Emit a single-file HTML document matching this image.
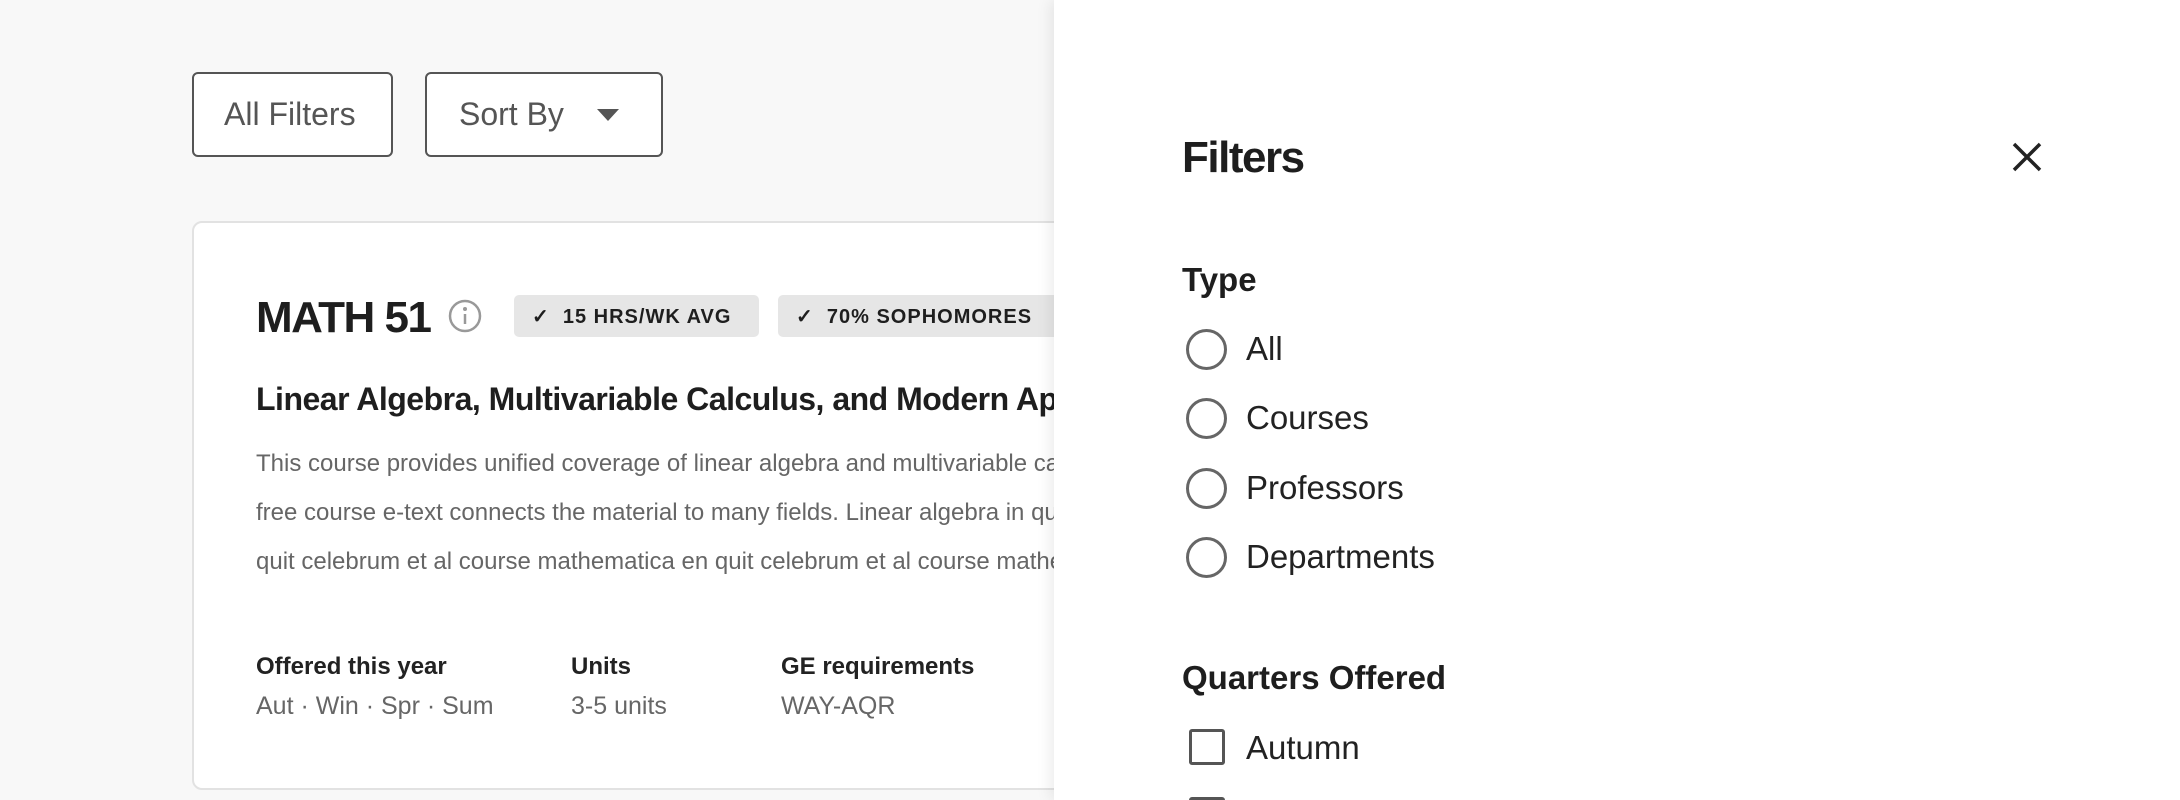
<!DOCTYPE html>
<html style="overflow:hidden;height:800px"><head><meta charset="utf-8"><style>
*{margin:0;padding:0;box-sizing:border-box}
body{width:2180px;height:800px;overflow:hidden;background:#f8f8f8;font-family:"Liberation Sans",sans-serif;position:relative;color:#1e1e1e}
.btn{position:absolute;top:72px;height:85px;border:2px solid #555;border-radius:6px;background:#fff;font-size:32px;color:#555;display:flex;align-items:center}
.card{position:absolute;left:192px;top:221px;width:1200px;height:569px;background:#fff;border:2px solid #e2e2e2;border-radius:10px;overflow:hidden}
.abs{position:absolute;white-space:nowrap}
.tag{position:absolute;top:72px;height:42px;background:#e6e6e6;border-radius:5px;font-size:20px;font-weight:bold;letter-spacing:1px;display:flex;align-items:center;padding-left:18px}
.desc{font-size:24px;color:#666;line-height:49px}
.lab{font-size:24px;font-weight:bold;color:#222}
.val{font-size:25px;color:#666}
.panel{position:absolute;left:1054px;top:0;width:1126px;height:800px;background:#fff;box-shadow:-4px 0 14px rgba(0,0,0,.08);overflow:hidden}
.radio{position:absolute;left:132px;width:41px;height:41px;border:3px solid #666;border-radius:50%}
.opt{position:absolute;left:192px;font-size:33px;color:#222}
</style></head><body>
<div class="btn" style="left:192px;width:201px;padding-left:30px">All Filters</div>
<div class="btn" style="left:425px;width:238px;padding-left:32px">Sort By<svg style="position:absolute;left:170px;top:35px" width="22" height="13"><path d="M0 0H22L11 12Z" fill="#555"/></svg></div>
<div class="card">
 <div class="abs" style="left:62px;top:70px;font-size:44px;font-weight:bold;letter-spacing:-1.5px">MATH 51</div>
 <svg class="abs" style="left:253px;top:75px" width="36" height="36"><circle cx="18" cy="18" r="15" fill="none" stroke="#999" stroke-width="2.5"/><circle cx="18" cy="11" r="2" fill="#999"/><path d="M18 16V26" stroke="#999" stroke-width="2.5"/></svg>
 <div class="tag" style="left:320px;width:245px">✓&nbsp; 15 HRS/WK AVG</div>
 <div class="tag" style="left:584px;width:300px">✓&nbsp; 70% SOPHOMORES</div>
 <div class="abs" style="left:62px;top:158px;font-size:32px;font-weight:bold;letter-spacing:-0.5px">Linear Algebra, Multivariable Calculus, and Modern Applications</div>
 <div class="abs desc" style="left:62px;top:216px">This course provides unified coverage of linear algebra and multivariable calculus, and the<br>free course e-text connects the material to many fields. Linear algebra in quit celebrum<br>quit celebrum et al course mathematica en quit celebrum et al course mathematica</div>
 <div class="abs lab" style="left:62px;top:430px">Offered this year</div>
 <div class="abs val" style="left:62px;top:469px">Aut · Win · Spr · Sum</div>
 <div class="abs lab" style="left:377px;top:430px">Units</div>
 <div class="abs val" style="left:377px;top:469px">3-5 units</div>
 <div class="abs lab" style="left:587px;top:430px">GE requirements</div>
 <div class="abs val" style="left:587px;top:469px">WAY-AQR</div>
</div>
<div class="panel">
 <div class="abs" style="left:128px;top:133px;font-size:44px;font-weight:bold;letter-spacing:-1.5px">Filters</div>
 <svg class="abs" style="left:958px;top:142px" width="30" height="30"><path d="M2 2L28 28M28 2L2 28" stroke="#222" stroke-width="3.5"/></svg>
 <div class="abs" style="left:128px;top:261px;font-size:33px;font-weight:bold">Type</div>
 <div class="radio" style="top:329px"></div><div class="abs opt" style="top:330px">All</div>
 <div class="radio" style="top:398px"></div><div class="abs opt" style="top:399px">Courses</div>
 <div class="radio" style="top:468px"></div><div class="abs opt" style="top:469px">Professors</div>
 <div class="radio" style="top:537px"></div><div class="abs opt" style="top:538px">Departments</div>
 <div class="abs" style="left:128px;top:659px;font-size:33px;font-weight:bold">Quarters Offered</div>
 <div class="abs" style="left:135px;top:729px;width:36px;height:36px;border:3px solid #555;border-radius:3px"></div>
 <div class="abs opt" style="top:729px">Autumn</div>
 <div class="abs" style="left:135px;top:797px;width:36px;height:36px;border:3px solid #555;border-radius:3px"></div>
</div>
</body></html>
